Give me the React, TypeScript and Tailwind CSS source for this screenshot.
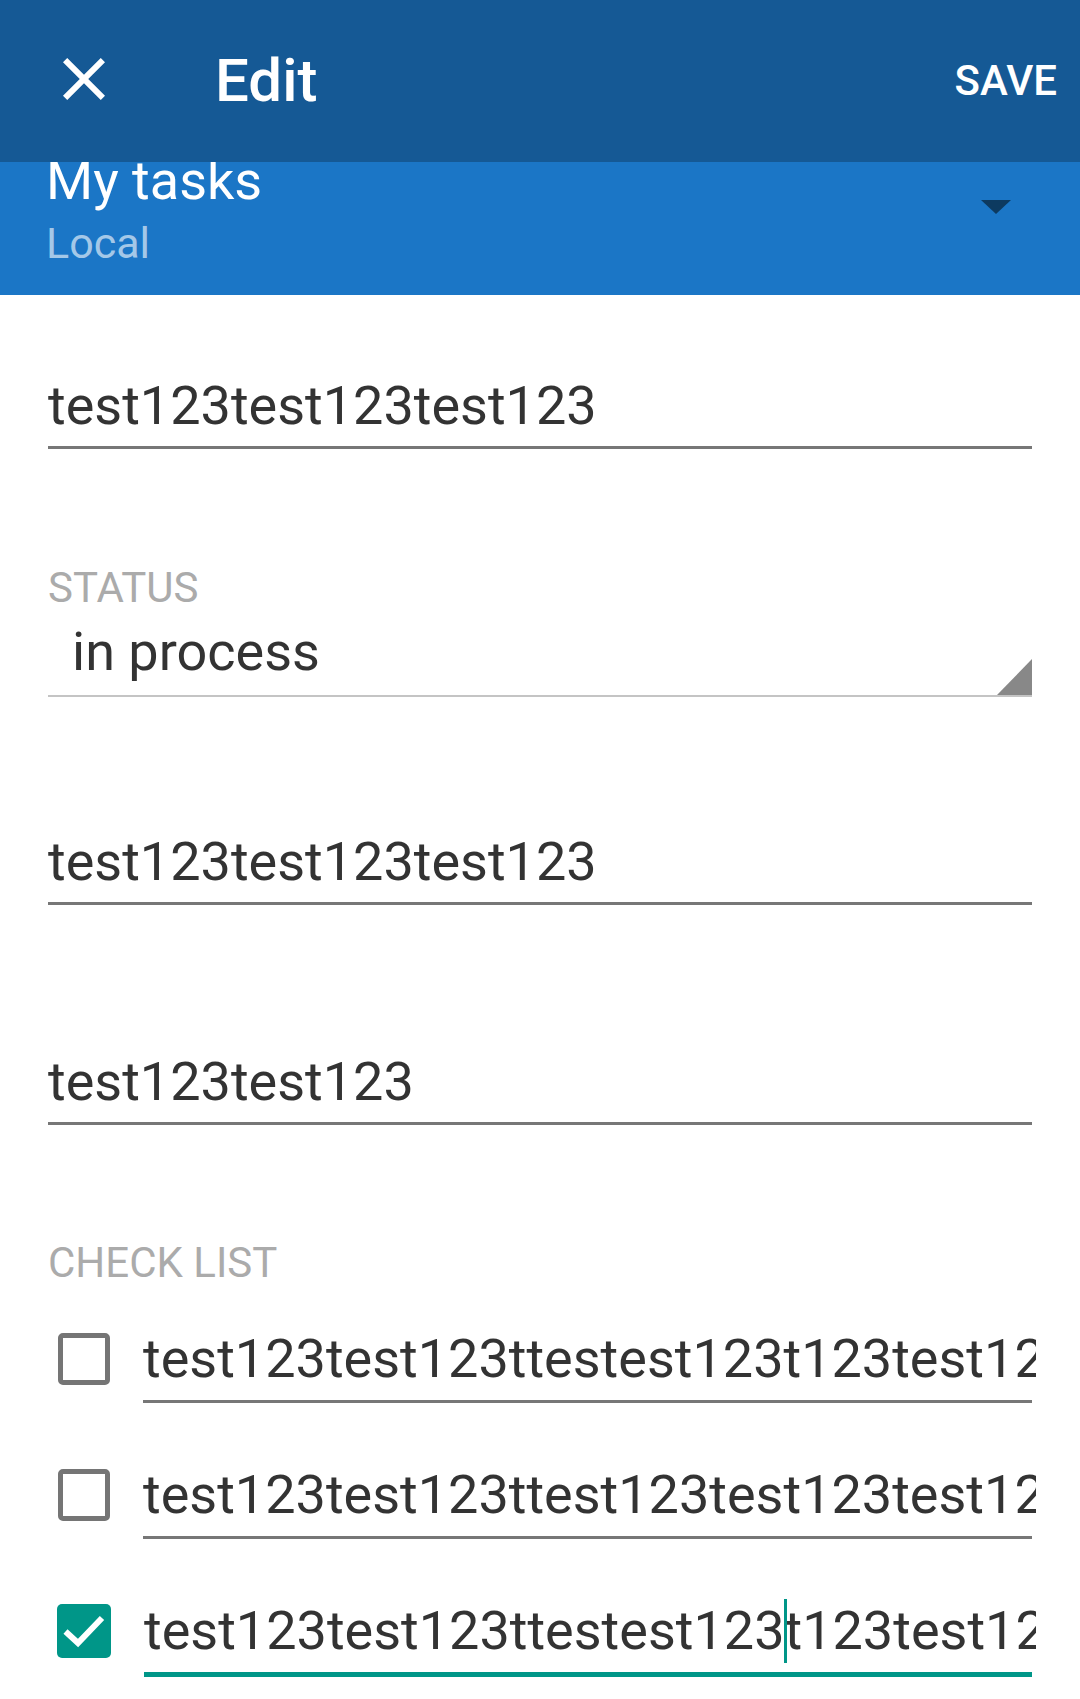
import { clsx } from "clsx";

function CloseIcon() {
  return (
    <svg width="72" height="72" viewBox="0 0 24 24" className="-mt-[4px] shrink-0">
      <path
        fill="#ffffff"
        d="M19 6.41L17.59 5 12 10.59 6.41 5 5 6.41 10.59 12 5 17.59 6.41 19 12 13.41 17.59 19 19 17.59 13.41 12z"
      />
    </svg>
  );
}

function Field({ value, className }: { value: string; className?: string }) {
  return (
    <div className={clsx("border-b-[3px] border-[#777777] pb-[8px]", className)}>
      <div className="h-[64px] overflow-hidden whitespace-nowrap text-[54px] leading-[64px] text-[#333333]">
        {value}
      </div>
    </div>
  );
}

function Checkbox({ checked }: { checked: boolean }) {
  if (checked) {
    return (
      <div className="ml-[9px] mt-[5px] flex h-[54px] w-[54px] shrink-0 items-center justify-center rounded-[5px] bg-[#009688]">
        <svg width="54" height="54" viewBox="0 0 54 54">
          <polyline
            points="8.5,27.5 21,39 45,14"
            fill="none"
            stroke="#ffffff"
            strokeWidth="6"
          />
        </svg>
      </div>
    );
  }
  return (
    <div className="ml-[10px] mt-[6px] h-[52px] w-[52px] shrink-0 rounded-[5px] border-[5px] border-[#757575]" />
  );
}

function CheckItem({
  before,
  after,
  checked,
  focused,
  className,
}: {
  before: string;
  after?: string;
  checked: boolean;
  focused?: boolean;
  className?: string;
}) {
  return (
    <div className={clsx("flex items-start", className)}>
      <Checkbox checked={checked} />
      <div
        className={clsx(
          "ml-[33px] min-w-0 flex-1 pb-[9px]",
          focused ? "border-b-[5px] border-[#009688]" : "border-b-[3px] border-[#777777]",
        )}
      >
        <div className="-mr-[4px] h-[64px] overflow-hidden whitespace-nowrap text-[54px] leading-[64px] text-[#333333]">
          {before}
          {focused && (
            <span className="relative">
              <span className="absolute -left-[1px] -top-[6px] h-[73px] w-[3px] bg-[#009688]" />
            </span>
          )}
          {after}
        </div>
      </div>
    </div>
  );
}

export default function App() {
  return (
    <div className="min-h-[1699px] w-[1080px] overflow-hidden bg-white font-[Roboto,sans-serif]">
      {/* Toolbar */}
      <div className="relative z-10 flex h-[162px] items-center bg-[#155995] pl-[48px] pr-[23px]">
        <CloseIcon />
        <span className="ml-[95px] text-[60px] font-medium leading-none text-white">Edit</span>
        <span className="ml-auto text-[42px] font-medium leading-none text-white">SAVE</span>
      </div>

      {/* List picker */}
      <div className="flex h-[133px] justify-between bg-[#1b76c6] pl-[46px] pr-[69px]">
        <div className="flex flex-col">
          <span className="text-[54px] leading-[37px] text-white">My tasks</span>
          <span className="mt-[23px] text-[43px] leading-[43px] text-[#a4c8e8]">Local</span>
        </div>
        <svg width="30" height="14" viewBox="0 0 30 14" className="mt-[38px]">
          <polygon points="0,0 30,0 15,14" fill="#0d3a60" />
        </svg>
      </div>

      {/* Form */}
      <div className="flex flex-col px-[48px]">
        <Field value="test123test123test123" className="mt-[79px]" />

        <span className="mt-[118px] text-[42px] leading-[42px] text-[#ababab]">STATUS</span>
        <div className="relative mt-[11px] border-b-2 border-[#c4c4c4] pb-[11px] pl-[24px]">
          <div className="h-[64px] text-[54px] leading-[64px] text-[#333333]">in process</div>
          <svg width="35" height="36" viewBox="0 0 35 36" className="absolute bottom-0 right-0">
            <polygon points="35,0 35,36 0,36" fill="#888888" />
          </svg>
        </div>

        <Field value="test123test123test123" className="mt-[133px]" />
        <Field value="test123test123" className="mt-[145px]" />

        <span className="mt-[117px] text-[42px] leading-[42px] text-[#ababab]">CHECK LIST</span>

        <CheckItem
          className="mt-[43px]"
          checked={false}
          before="test123test123ttestest123t123test123"
        />
        <CheckItem
          className="mt-[60px]"
          checked={false}
          before="test123test123ttest123test123test123"
        />
        <CheckItem
          className="mt-[60px]"
          checked
          focused
          before="test123test123ttestest123"
          after="t123test123"
        />
      </div>
    </div>
  );
}
